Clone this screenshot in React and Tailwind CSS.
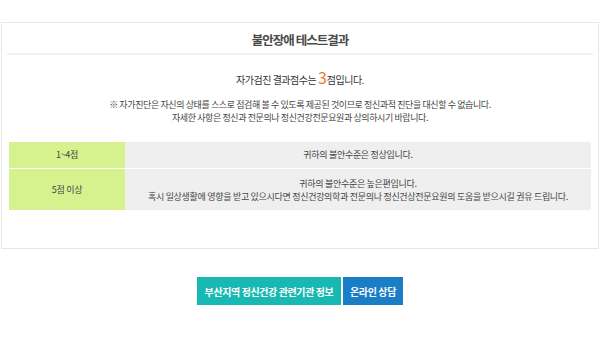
export default function App() {
  const font = { fontFamily: '"Noto Sans CJK KR", "Noto Sans", sans-serif' };
  return (
    <div className="w-[600px] h-[345px] bg-white pt-[22px] px-[1px] text-[#444]" style={font}>
      <div className="h-[227px] border border-[#e6e6e6] px-[5px]">
        <div className="h-[30px] pt-[10px] text-center text-[12.5px] leading-[14px] tracking-[-1px] font-bold text-[#4a4a4a]">
          불안장애 테스트결과
        </div>
        <div className="h-[2px] bg-[#f0f0f0]" />
        <div className="mt-[14px] text-center text-[10px] leading-[16px] tracking-[-0.5px] text-[#333]">
          자가검진 결과점수는 <span className="text-[16px] text-[#f47b2a] tracking-normal">3</span>점입니다.
        </div>
        <div className="mt-[10px] text-center text-[9px] leading-[13px] tracking-[-0.4px] text-[#444]">
          <p>※ 자가진단은 자신의 상태를 스스로 점검해 볼 수 있도록 제공된 것이므로 정신과적 진단을 대신할 수 없습니다.</p>
          <p>자세한 사항은 정신과 전문의나 정신건강전문요원과 상의하시기 바랍니다.</p>
        </div>
        <div className="mt-[18px] mx-[2px] flex flex-col gap-[1px] text-[9px] tracking-[-0.3px] text-[#444]">
          <div className="flex h-[26px]">
            <div className="w-[116px] bg-[#d6f28e] flex items-center justify-center">1~4점</div>
            <div className="flex-1 bg-[#efefef] flex items-center justify-center">귀하의 불안수준은 정상입니다.</div>
          </div>
          <div className="flex h-[41px]">
            <div className="w-[116px] bg-[#d6f28e] flex items-center justify-center">5점 이상</div>
            <div className="flex-1 bg-[#efefef] flex flex-col items-center justify-center leading-[13px] text-center">
              <p>귀하의 불안수준은 높은편입니다.</p>
              <p>혹시 일상생활에 영향을 받고 있으시다면 정신건강의학과 전문의나 정신건상전문요원의 도움을 받으시길 권유 드립니다.</p>
            </div>
          </div>
        </div>
      </div>
      <div className="mt-[28px] flex justify-center gap-[2px]">
        <button className="w-[144px] h-[28px] bg-[#19b9b3] text-white text-[10px] font-bold tracking-[-0.4px]">
          부산지역 정신건강 관련기관 정보
        </button>
        <button className="w-[60px] h-[28px] bg-[#1a7ec6] text-white text-[10px] font-bold tracking-[-0.4px]">
          온라인 상담
        </button>
      </div>
    </div>
  );
}
